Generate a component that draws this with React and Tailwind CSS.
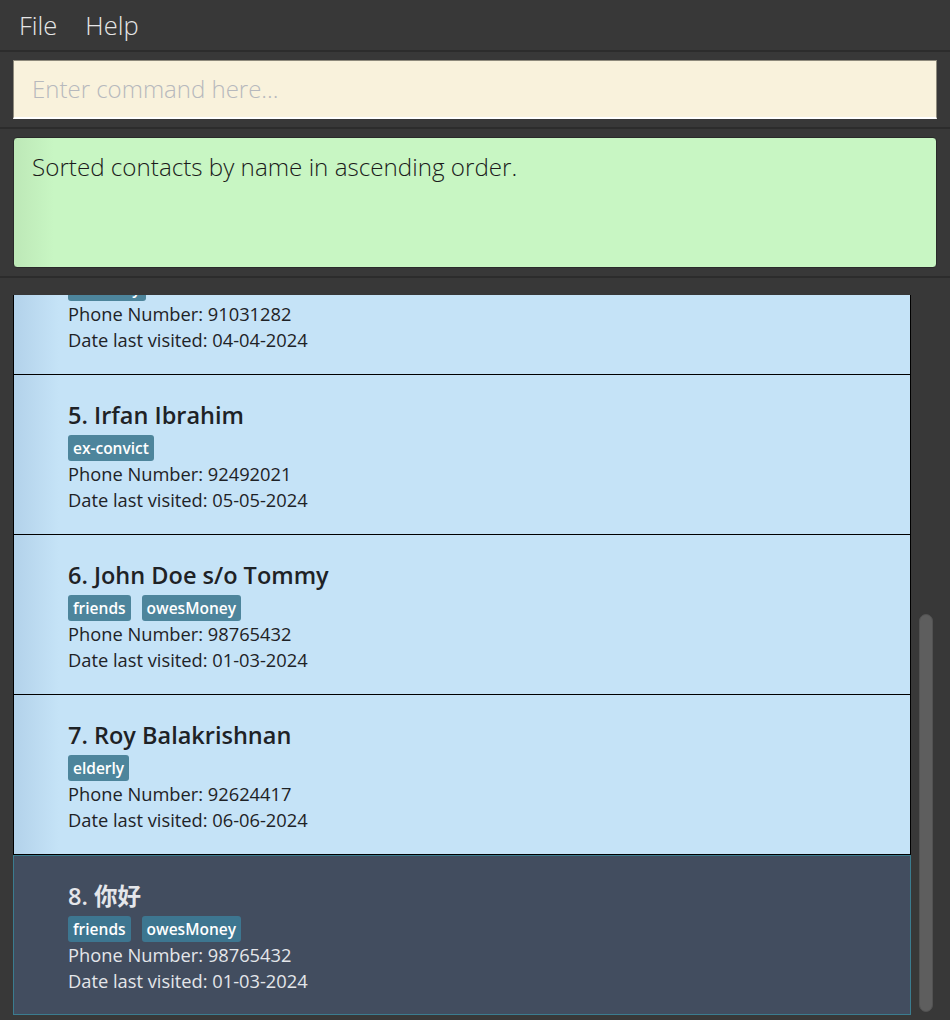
import React from 'react';

const persons = [
  { id: 4, name: 'David Li', tags: ['disability'], phone: '91031282', date: '04-04-2024' },
  { id: 5, name: 'Irfan Ibrahim', tags: ['ex-convict'], phone: '92492021', date: '05-05-2024' },
  { id: 6, name: 'John Doe s/o Tommy', tags: ['friends', 'owesMoney'], phone: '98765432', date: '01-03-2024' },
  { id: 7, name: 'Roy Balakrishnan', tags: ['elderly'], phone: '92624417', date: '06-06-2024' },
  { id: 8, name: '你好', tags: ['friends', 'owesMoney'], phone: '98765432', date: '01-03-2024', selected: true },
];

const font = "font-['Open_Sans','Noto_Sans_CJK_SC',sans-serif]";

function PersonCard({ person }) {
  const sel = person.selected;
  return (
    <div
      className={`h-[160px] flex flex-col pl-[54px] pt-[26px] ${
        sel
          ? 'bg-[#424d5f] border border-[#3b7c8f] text-[#e4e6ea]'
          : 'bg-[linear-gradient(to_right,#b3d2ea,#c5e3f7_45px)] border-l border-r border-b border-black text-[#1e2226]'
      }`}
    >
      <div className="h-[28px] leading-[28px] text-[23.5px] font-semibold">
        {person.id}. {person.name}
      </div>
      <div className="flex gap-[11px] mt-[6px] h-[26px]">
        {person.tags.map((t) => (
          <span
            key={t}
            className={`h-[26px] leading-[26px] px-[5px] rounded-[3px] text-[15.5px] font-semibold text-white ${
              sel ? 'bg-[#3d7690]' : 'bg-[#4d859c]'
            }`}
          >
            {t}
          </span>
        ))}
      </div>
      <div className="leading-[26px] text-[18.3px]">Phone Number: {person.phone}</div>
      <div className="leading-[26px] text-[18.3px]">Date last visited: {person.date}</div>
    </div>
  );
}

export default function App() {
  return (
    <div className={`w-[950px] h-[1020px] bg-[#383838] flex flex-col overflow-hidden ${font}`}>
      {/* Menu bar */}
      <div className="h-[52px] flex items-center gap-[28px] pl-[19px] border-b-2 border-[#2c2c2c] text-[#e6e6e6] text-[25.5px] font-light">
        <span>File</span>
        <span>Help</span>
      </div>

      {/* Command box */}
      <div className="h-[77px] px-[13px] pt-[8px] border-b-2 border-[#2c2c2c]">
        <div className="h-[59px] bg-[#f9f2dc] border-t border-l border-[#8e8a7c] border-r border-r-[#8e8a7c] border-b-2 border-b-white flex items-center pl-[18px] text-[24px] font-light text-[#b7b9bd]">
          Enter command here...
        </div>
      </div>

      {/* Result box */}
      <div className="h-[149px] px-[13px] pt-[8px] border-b-2 border-[#2c2c2c]">
        <div className="h-[131px] bg-[linear-gradient(to_right,#bde8b7,#c8f6c3_40px)] rounded-[4px] border border-[#2a2a2a] pl-[18px] pt-[11px] text-[24.2px] font-light text-[#1b1b1b]">
          Sorted contacts by name in ascending order.
        </div>
      </div>

      {/* List */}
      <div className="flex-1 flex pt-[17px] pl-[13px] pr-[16px] min-h-0">
        <div className="w-[898px] overflow-hidden">
          <div className="-mt-[80px]">
            {persons.map((p) => (
              <PersonCard key={p.id} person={p} />
            ))}
          </div>
        </div>
        <div className="flex-1 flex justify-center">
          <div className="w-[14px] mt-[319px] mb-[8px] rounded-full bg-[#5e5e5e] border border-[#525252] ml-[6px]" />
        </div>
      </div>
    </div>
  );
}
